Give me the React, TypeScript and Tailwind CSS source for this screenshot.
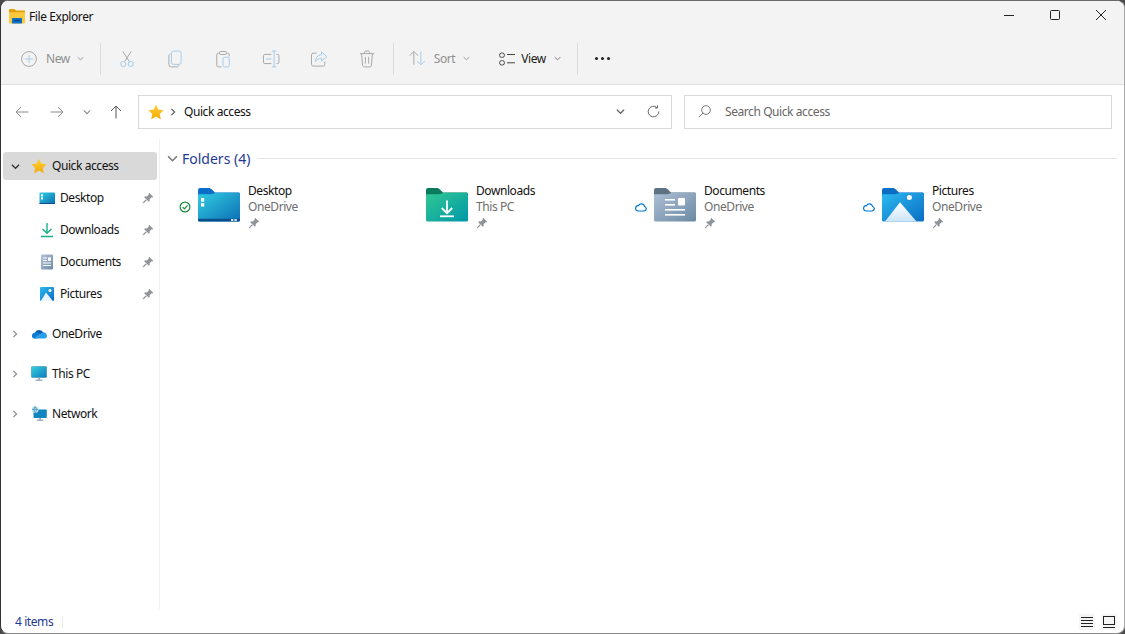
import * as React from "react";

// ── Small line icons ────────────────────────────────────────────

const GRAY = "#a9a9a9";
const BLUE = "#a5cdee";

function Chevron({ dir = "down", color = "#8a8a8a", size = 8 }: { dir?: "down" | "right"; color?: string; size?: number }) {
  return (
    <svg width={size} height={size} viewBox="0 0 8 8" fill="none" stroke={color} strokeWidth="1.1">
      {dir === "down" ? <path d="M0.8 2.4 4 5.6 7.2 2.4" /> : <path d="M2.4 0.8 5.6 4 2.4 7.2" />}
    </svg>
  );
}

function ToolIcon({ children, size = 20 }: { children: React.ReactNode; size?: number }) {
  return (
    <svg width={size} height={size} viewBox="0 0 24 24" fill="none" strokeWidth="1.2">
      {children}
    </svg>
  );
}

function Pin({ size = 12 }: { size?: number }) {
  return (
    <svg width={size} height={size} viewBox="0 0 12 12" fill="#8e9499">
      <path d="M7.2 0.8 11.2 4.8 10.3 5.5 9.6 5.2 7.6 7.2 7.7 9 6.8 9.8 2.2 5.2 3 4.3 4.8 4.4 6.8 2.4 6.5 1.7Z" />
      <path d="M3.6 7.4 4.6 8.4 1.2 11.4 0.6 10.8Z" />
    </svg>
  );
}

function Star({ size = 16 }: { size?: number }) {
  return (
    <svg width={size} height={size} viewBox="0 0 16 16">
      <defs>
        <linearGradient id="star" x1="0" y1="0" x2="0" y2="1">
          <stop offset="0" stopColor="#ffd23f" />
          <stop offset="1" stopColor="#f5a800" />
        </linearGradient>
      </defs>
      <path d="M8 0.6 10.3 5.5 15.6 6.2 11.7 9.9 12.8 15.3 8 12.6 3.2 15.3 4.3 9.9 0.4 6.2 5.7 5.5Z" fill="url(#star)" />
    </svg>
  );
}

function CloudStatus() {
  return (
    <svg width="12" height="10" viewBox="0 0 12 10" fill="none" stroke="#0078d4" strokeWidth="1.2">
      <path d="M3 9H9.2A2.3 2.3 0 0 0 9.6 4.5 3.2 3.2 0 0 0 3.6 3.6 2.7 2.7 0 0 0 3 9Z" />
    </svg>
  );
}

function CheckStatus() {
  return (
    <svg width="12" height="12" viewBox="0 0 12 12" fill="none" stroke="#1a8a3c" strokeWidth="1.2">
      <circle cx="6" cy="6" r="4.9" />
      <path d="M3.6 6.1 5.4 7.8 8.5 4.4" />
    </svg>
  );
}

// ── Folder icons (large tiles) ──────────────────────────────────

function FolderShape({ id, tab, from, to, children }: { id: string; tab: string; from: string; to: string; children?: React.ReactNode }) {
  return (
    <svg width="42" height="34" viewBox="0 0 42 34">
      <defs>
        <linearGradient id={id} x1="0" y1="0" x2="1" y2="1">
          <stop offset="0" stopColor={from} />
          <stop offset="1" stopColor={to} />
        </linearGradient>
      </defs>
      <path d="M0 2A2 2 0 0 1 2 0H10.5C12 0 13 .6 14 1.6L17 4.6H40.5A1.5 1.5 0 0 1 42 6V12H0Z" fill={tab} />
      <path d="M0 6.2H10.5C12.5 6.2 14 6.4 16 5.6L18 4.8H40.5A1.5 1.5 0 0 1 42 6.3V32A1.6 1.6 0 0 1 40.4 33.6H1.6A1.6 1.6 0 0 1 0 32Z" fill={`url(#${id})`} />
      {children}
    </svg>
  );
}

function DesktopFolder() {
  return (
    <FolderShape id="fDesktop" tab="#0b6fc9" from="#31cde2" to="#0c6eb4">
      <path d="M0 30.8H42V32A1.6 1.6 0 0 1 40.4 33.6H1.6A1.6 1.6 0 0 1 0 32Z" fill="#0a4e8c" />
      <rect x="3" y="10" width="3.2" height="3.6" fill="#fff" />
      <rect x="3" y="15" width="3.2" height="3.6" fill="#fff" />
      <rect x="33" y="31" width="2.4" height="2" fill="#cfe3f3" />
      <rect x="36.4" y="31" width="2.4" height="2" fill="#cfe3f3" />
    </FolderShape>
  );
}

function DownloadsFolder() {
  return (
    <FolderShape id="fDown" tab="#0a7a5f" from="#31c893" to="#0097a7">
      <path d="M21 12.5V25M15.8 20 21 25.2 26.2 20" fill="none" stroke="#fff" strokeWidth="1.8" />
      <rect x="14" y="27.4" width="14" height="1.8" fill="#fff" />
    </FolderShape>
  );
}

function DocumentsFolder() {
  return (
    <FolderShape id="fDocs" tab="#5d7383" from="#aebfd6" to="#6b89a3">
      <rect x="11" y="11" width="10" height="1.6" fill="#fff" />
      <rect x="11" y="16" width="10" height="1.6" fill="#fff" />
      <rect x="24" y="10" width="7" height="7.4" rx="1" fill="#fff" />
      <rect x="11" y="21" width="20" height="1.6" fill="#fff" />
      <rect x="11" y="26" width="20" height="1.6" fill="#fff" />
    </FolderShape>
  );
}

function PicturesFolder() {
  return (
    <FolderShape id="fPics" tab="#0a6cc5" from="#2cbaf0" to="#0a6cc3">
      <defs>
        <linearGradient id="mount" x1="0" y1="0" x2="0" y2="1">
          <stop offset="0" stopColor="#ffffff" />
          <stop offset="1" stopColor="#cbe4f8" />
        </linearGradient>
      </defs>
      <circle cx="27.4" cy="9.4" r="2.5" fill="#fff" />
      <path d="M18 14.2 34.5 33.4H3Z" fill="url(#mount)" />
    </FolderShape>
  );
}

// ── Small sidebar icons ─────────────────────────────────────────

function DesktopSmall() {
  return (
    <svg width="16" height="16" viewBox="0 0 16 16">
      <defs>
        <linearGradient id="dSmall" x1="0" y1="0" x2="1" y2="1">
          <stop offset="0" stopColor="#30cfe4" />
          <stop offset="1" stopColor="#0b6db2" />
        </linearGradient>
      </defs>
      <rect x="0.5" y="2.5" width="15.5" height="11.5" rx="1" fill="url(#dSmall)" />
      <rect x="0.5" y="13" width="15.5" height="1" fill="#0a4e8c" />
      <rect x="2" y="4.4" width="2" height="2" fill="#fff" />
      <rect x="2" y="7.4" width="2" height="2" fill="#fff" />
    </svg>
  );
}

function DownloadsSmall() {
  return (
    <svg width="16" height="16" viewBox="0 0 16 16" fill="none" stroke="#17b088" strokeWidth="1.4">
      <path d="M8 1V11M3.6 7 8 11.2 12.4 7" />
      <path d="M2 14.6H14" strokeWidth="1.5" />
    </svg>
  );
}

function DocumentsSmall() {
  return (
    <svg width="16" height="16" viewBox="0 0 16 16">
      <defs>
        <linearGradient id="docSmall" x1="0" y1="0" x2="1" y2="1">
          <stop offset="0" stopColor="#b3c4da" />
          <stop offset="1" stopColor="#6b89a3" />
        </linearGradient>
      </defs>
      <rect x="2" y="0.5" width="12" height="15" rx="1" fill="url(#docSmall)" />
      <path d="M4 4H8M4 6.5H8M4 9H12M4 11.5H12" stroke="#fff" strokeWidth="1" />
      <rect x="9" y="3.4" width="3" height="3.4" fill="#fff" />
    </svg>
  );
}

function PicturesSmall() {
  return (
    <svg width="16" height="16" viewBox="0 0 16 16">
      <defs>
        <linearGradient id="picSmall" x1="0" y1="0" x2="1" y2="1">
          <stop offset="0" stopColor="#2cbaf0" />
          <stop offset="1" stopColor="#0a6cc3" />
        </linearGradient>
      </defs>
      <rect x="1" y="1" width="14" height="14" rx="1" fill="url(#picSmall)" />
      <circle cx="11" cy="4.4" r="1.5" fill="#fff" />
      <path d="M7 6.6 13.8 15H1.8Z" fill="#eaf4fc" />
    </svg>
  );
}

function OneDriveIcon() {
  return (
    <svg width="16" height="16" viewBox="0 0 16 16">
      <path d="M4 6.4A4.8 4.8 0 0 1 12.4 6.8L8.4 9 5 7.2Z" fill="#0a5fb4" />
      <path d="M4.2 6.4A3.2 3.2 0 0 0 3 12.6H6L10 8.2 6 6.5Z" fill="#0f7ad0" />
      <path d="M3 12.6H13.4A2.5 2.5 0 0 0 15.8 9.2 3 3 0 0 0 11.6 6.6L6.6 9.4Z" fill="#2aa0e8" />
    </svg>
  );
}

function PcIcon() {
  return (
    <svg width="16" height="16" viewBox="0 0 16 16">
      <defs>
        <linearGradient id="pcGrad" x1="0" y1="0" x2="1" y2="1">
          <stop offset="0" stopColor="#38d2de" />
          <stop offset="1" stopColor="#0b79bd" />
        </linearGradient>
      </defs>
      <rect x="0.4" y="0.5" width="15.2" height="11" rx="1" fill="url(#pcGrad)" stroke="#0e6f9f" strokeWidth="0.4" />
      <rect x="7.2" y="11.5" width="1.6" height="2.4" fill="#8ea1ad" />
      <rect x="4.6" y="13.6" width="6.8" height="1.2" fill="#8ea1ad" />
    </svg>
  );
}

function NetworkIcon() {
  return (
    <svg width="16" height="16" viewBox="0 0 16 16">
      <rect x="2.5" y="3.5" width="13.3" height="8.4" rx="0.8" fill="#0f86c2" />
      <rect x="8.3" y="11.9" width="1.6" height="2" fill="#8ea1ad" />
      <rect x="5.8" y="13.6" width="6.6" height="1.2" fill="#8ea1ad" />
      <circle cx="4.2" cy="3.6" r="3.4" fill="#bfe0ee" />
      <path d="M1 3.4H7.4M4.2 0.4C2.6 2.4 2.6 4.8 4.2 6.9M4.2 0.4C5.8 2.4 5.8 4.8 4.2 6.9" stroke="#3b8fb8" strokeWidth="0.7" fill="none" />
    </svg>
  );
}

function ExplorerIcon() {
  return (
    <svg width="16" height="15" viewBox="0 0 16 15">
      <path d="M0 1.2A1.2 1.2 0 0 1 1.2 0H5.4L7 1.6H16V6H0Z" fill="#e2a008" />
      <path d="M0 3.2H16V13.6A1 1 0 0 1 15 14.6H1A1 1 0 0 1 0 13.6Z" fill="#fdc93c" />
      <rect x="3" y="9" width="10" height="5.6" rx="0.6" fill="#0f6fc6" />
      <rect x="5" y="11" width="6" height="1" fill="#073f78" />
    </svg>
  );
}

// ── Data ────────────────────────────────────────────────────────

const TOOL_ACTIONS: { name: string; icon: React.ReactNode }[] = [
  {
    name: "cut",
    icon: (
      <ToolIcon>
        <path d="M7 3 14.8 15M17 3 9.2 15" stroke={GRAY} />
        <circle cx="7.5" cy="18" r="3.1" stroke={BLUE} />
        <circle cx="16.5" cy="18" r="3.1" stroke={BLUE} />
      </ToolIcon>
    ),
  },
  {
    name: "copy",
    icon: (
      <ToolIcon>
        <path d="M6.5 6C5.2 6.5 4.7 7.3 4.7 8.5V18.5A3 3 0 0 0 7.7 21.5H14C15.3 21.5 16 21 16.5 19.5" stroke={GRAY} />
        <rect x="7.8" y="2.5" width="11.5" height="16" rx="2.2" stroke={BLUE} />
      </ToolIcon>
    ),
  },
  {
    name: "paste",
    icon: (
      <ToolIcon>
        <path d="M8 5H6.5A2 2 0 0 0 4.5 7V19.5A2 2 0 0 0 6.5 21.5H10M16 5H17.5A2 2 0 0 1 19.5 7V9" stroke={GRAY} />
        <rect x="8" y="3" width="8" height="3.6" rx="1" stroke={GRAY} />
        <rect x="12" y="10" width="7.5" height="11.5" rx="1.8" stroke={BLUE} />
      </ToolIcon>
    ),
  },
  {
    name: "rename",
    icon: (
      <ToolIcon>
        <path d="M12.5 6.5H4.5A1.5 1.5 0 0 0 3 8V16A1.5 1.5 0 0 0 4.5 17.5H12.5M18.5 6.5H20A1.5 1.5 0 0 1 21.5 8V16A1.5 1.5 0 0 1 20 17.5H18.5" stroke={GRAY} />
        <path d="M13 2.5H18.5M15.7 2.5V21.5M13 21.5H18.5M6 12H12.5" stroke={BLUE} />
      </ToolIcon>
    ),
  },
  {
    name: "share",
    icon: (
      <ToolIcon>
        <path d="M9 5H5A2 2 0 0 0 3 7V18.5A2 2 0 0 0 5 20.5H17A2 2 0 0 0 19 18.5V15" stroke={GRAY} />
        <path d="M15 3.5 21.5 9.2 15 14.5V11.2C11.5 11.2 9.2 12.5 7.5 15.5 8 10.5 10.5 7.2 15 6.8Z" stroke={BLUE} />
      </ToolIcon>
    ),
  },
  {
    name: "delete",
    icon: (
      <ToolIcon>
        <path d="M3.5 5.5H20.5M9 5.5V4A1.5 1.5 0 0 1 10.5 2.5H13.5A1.5 1.5 0 0 1 15 4V5.5M5.5 5.5 6.7 19.5A2.2 2.2 0 0 0 8.9 21.5H15.1A2.2 2.2 0 0 0 17.3 19.5L18.5 5.5M10 9.5V17.5M14 9.5V17.5" stroke={GRAY} />
      </ToolIcon>
    ),
  },
];

const PINNED = [
  { name: "Desktop", icon: <DesktopSmall /> },
  { name: "Downloads", icon: <DownloadsSmall /> },
  { name: "Documents", icon: <DocumentsSmall /> },
  { name: "Pictures", icon: <PicturesSmall /> },
];

const ROOTS = [
  { name: "OneDrive", icon: <OneDriveIcon /> },
  { name: "This PC", icon: <PcIcon /> },
  { name: "Network", icon: <NetworkIcon /> },
];

const FOLDERS = [
  { name: "Desktop", place: "OneDrive", status: <CheckStatus />, icon: <DesktopFolder /> },
  { name: "Downloads", place: "This PC", status: null, icon: <DownloadsFolder /> },
  { name: "Documents", place: "OneDrive", status: <CloudStatus />, icon: <DocumentsFolder /> },
  { name: "Pictures", place: "OneDrive", status: <CloudStatus />, icon: <PicturesFolder /> },
];

function Separator() {
  return <div className="h-8 w-px bg-[#dcdcdc]" />;
}

// ── Page ────────────────────────────────────────────────────────

export default function App() {
  return (
    <div className="h-[634px] w-[1125px] overflow-hidden bg-[#4a4a4a] font-['Noto_Sans',sans-serif] text-[12px] tracking-[-0.42px] text-[#111]">
      <div className="flex h-full flex-col overflow-hidden rounded-lg border-t border-r border-b border-l border-t-[#6a6a6a] border-r-[#a8a8a8] border-b-[#8a8a8a] border-l-[#333] bg-white">
        {/* Title bar */}
        <div className="flex h-[31px] shrink-0 items-center bg-[#f3f3f3] pl-2">
          <ExplorerIcon />
          <span className="ml-1 leading-none">File Explorer</span>
          <div className="ml-auto flex items-center pb-[4px]">
            <div className="flex w-[46px] justify-center">
              <svg width="10" height="10" viewBox="0 0 10 10" stroke="#222"><path d="M0 5.5H10" /></svg>
            </div>
            <div className="flex w-[46px] justify-center">
              <svg width="10" height="10" viewBox="0 0 10 10" fill="none" stroke="#222"><rect x="0.5" y="0.5" width="9" height="9" rx="1" /></svg>
            </div>
            <div className="flex w-[46px] justify-center pr-[1px]">
              <svg width="10" height="10" viewBox="0 0 10 10" stroke="#222"><path d="M0 0 10 10M10 0 0 10" /></svg>
            </div>
          </div>
        </div>

        {/* Command bar */}
        <div className="flex h-[53px] shrink-0 items-center border-b border-[#e0e0e0] bg-[#f3f3f3] pt-[1px] pl-[20px]">
          <svg width="16" height="16" viewBox="0 0 16 16" fill="none" stroke={GRAY}>
            <circle cx="8" cy="8" r="7.4" />
            <path d="M8 4V12M4 8H12" stroke={BLUE} />
          </svg>
          <span className="ml-[9px] text-[#8f8f8f]">New</span>
          <span className="ml-[7px]"><Chevron color="#9a9a9a" size={7} /></span>
          <div className="ml-[16px]"><Separator /></div>
          <div className="ml-[2px] flex">
            {TOOL_ACTIONS.map((a) => (
              <div key={a.name} className="flex w-[48px] justify-center">{a.icon}</div>
            ))}
          </div>
          <div className="ml-[2px]"><Separator /></div>
          <div className="ml-[14px] flex items-center">
            <ToolIcon size={20}>
              <path d="M7 19V3M2 8 7 3 12 8" stroke={GRAY} />
              <path d="M14 3V19M9.5 14.5 14 19 18.500 14.5" stroke={BLUE} transform="translate(1.5 0)" />
            </ToolIcon>
          </div>
          <span className="ml-[6px] text-[#8f8f8f]">Sort</span>
          <span className="ml-[8px]"><Chevron color="#9a9a9a" size={7} /></span>
          <svg className="ml-[29px]" width="16" height="14" viewBox="0 0 16 14" fill="none" stroke="#444">
            <rect x="0.6" y="1" width="4.8" height="4.4" rx="2" />
            <rect x="0.6" y="8.6" width="4.8" height="4.4" rx="2" />
            <path d="M8 2.5H16M8 10.8H16" />
          </svg>
          <span className="ml-[6px] text-[#1a1a1a]">View</span>
          <span className="ml-[8px]"><Chevron color="#777" size={7} /></span>
          <div className="ml-[16px]"><Separator /></div>
          <div className="ml-[17px] flex gap-[3px]">
            <div className="h-[3px] w-[3px] rounded-full bg-[#222]" />
            <div className="h-[3px] w-[3px] rounded-full bg-[#222]" />
            <div className="h-[3px] w-[3px] rounded-full bg-[#222]" />
          </div>
        </div>

        {/* Address row */}
        <div className="flex h-[54px] shrink-0 items-center pb-[1px] pr-[12px]">
          <div className="flex w-[137px] shrink-0 items-center">
            <svg className="ml-[14px]" width="14" height="12" viewBox="0 0 14 12" fill="none" stroke="#8c8c8c"><path d="M13.5 6H1M6 1 1 6 6 11" /></svg>
            <svg className="ml-[21px]" width="14" height="12" viewBox="0 0 14 12" fill="none" stroke="#8c8c8c"><path d="M0.5 6H13M8 1 13 6 8 11" /></svg>
            <span className="ml-[19px]"><Chevron color="#8c8c8c" size={8} /></span>
            <svg className="ml-[19px]" width="12" height="14" viewBox="0 0 12 14" fill="none" stroke="#555"><path d="M6 13.5V1M1 6 6 1 11 6" /></svg>
          </div>
          <div className="flex h-[34px] w-[534px] items-center border border-[#d9d9d9] pl-[9px] pr-[11px]">
            <Star />
            <span className="ml-[5px]"><Chevron dir="right" color="#555" size={8} /></span>
            <span className="ml-[7px]">Quick access</span>
            <span className="ml-auto"><Chevron color="#666" size={9} /></span>
            <svg className="ml-[22px]" width="13" height="13" viewBox="0 0 13 13" fill="none" stroke="#666">
              <path d="M11.8 6.5A5.3 5.3 0 1 1 9.8 2.4" />
              <path d="M10.5 0.4V3H7.9" />
            </svg>
          </div>
          <div className="ml-[12px] flex h-[34px] flex-1 items-center border border-[#d9d9d9] pl-[13px] text-[#666]">
            <svg width="13" height="13" viewBox="0 0 13 13" fill="none" stroke="#777">
              <circle cx="8" cy="5" r="4.3" />
              <path d="M5 8 0.8 12.2" />
            </svg>
            <span className="ml-[14px]">Search Quick access</span>
          </div>
        </div>

        {/* Main */}
        <div className="flex min-h-0 flex-1">
          {/* Navigation pane */}
          <div className="w-[159px] shrink-0 border-r border-[#f0f0f0] px-[2px] pt-[13px]">
            <div className="flex h-[28px] items-center rounded-[3px] bg-[#d9d9d9] pl-[8px]">
              <Chevron color="#333" size={9} />
              <span className="ml-[11px]"><Star size={16} /></span>
              <span className="ml-[5px]">Quick access</span>
            </div>
            <div className="flex flex-col pt-[2px]">
              {PINNED.map((p) => (
                <div key={p.name} className="flex h-[32px] items-center pl-[36px] pr-[3px]">
                  {p.icon}
                  <span className="ml-[5px]">{p.name}</span>
                  <span className="ml-auto"><Pin size={12} /></span>
                </div>
              ))}
            </div>
            <div className="flex flex-col pt-[4px]">
              {ROOTS.map((r) => (
                <div key={r.name} className="flex h-[40px] items-center pl-[8px]">
                  <Chevron dir="right" color="#8a8a8a" size={8} />
                  <span className="ml-[12px]">{r.icon}</span>
                  <span className="ml-[5px]">{r.name}</span>
                </div>
              ))}
            </div>
          </div>

          {/* Content */}
          <div className="min-w-0 flex-1 pt-[9px]">
            <div className="flex h-[20px] items-center pl-[7px] pr-[7px]">
              <Chevron color="#777" size={11} />
              <span className="ml-[4px] text-[14px] tracking-normal text-[#1f3a93]">Folders (4)</span>
              <div className="ml-[7px] h-px flex-1 bg-[#e5e5e5]" />
            </div>
            <div className="mt-[15px] grid grid-cols-[228px_228px_228px_228px] pl-[18px]">
              {FOLDERS.map((f) => (
                <div key={f.name} className="flex h-[50px]">
                  <div className="flex w-[20px] shrink-0 items-center pb-[3px] pl-[1px]">{f.status}</div>
                  <div className="pt-[5px]">{f.icon}</div>
                  <div className="ml-[8px] flex flex-col">
                    <span className="h-[16px] leading-[16px]">{f.name}</span>
                    <span className="h-[16px] leading-[16px] text-[#6d6d6d]">{f.place}</span>
                    <span className="pt-[2px]"><Pin size={12} /></span>
                  </div>
                </div>
              ))}
            </div>
          </div>
        </div>

        {/* Status bar */}
        <div className="flex h-[24px] shrink-0 items-center pt-[2px] pl-[14px] pr-[7px] text-[#1f3a93]">
          <span>4 items</span>
          <div className="ml-[9px] h-[12px] w-px bg-[#ececec]" />
          <div className="ml-auto flex items-center gap-[6px]">
            <div className="flex h-[16px] w-[16px] items-center justify-center bg-[#f5f5f5]">
              <svg width="12" height="10" viewBox="0 0 12 10" stroke="#222"><path d="M0 0.5H12M0 3.5H12M0 6.5H12M0 9.5H12" /></svg>
            </div>
            <div className="flex h-[16px] w-[16px] items-center justify-center bg-[#f5f5f5]">
              <svg width="12" height="12" viewBox="0 0 12 12" fill="none" stroke="#222"><rect x="0.5" y="0.5" width="11" height="8" /><path d="M0 11.5H12" /></svg>
            </div>
          </div>
        </div>
      </div>
    </div>
  );
}
